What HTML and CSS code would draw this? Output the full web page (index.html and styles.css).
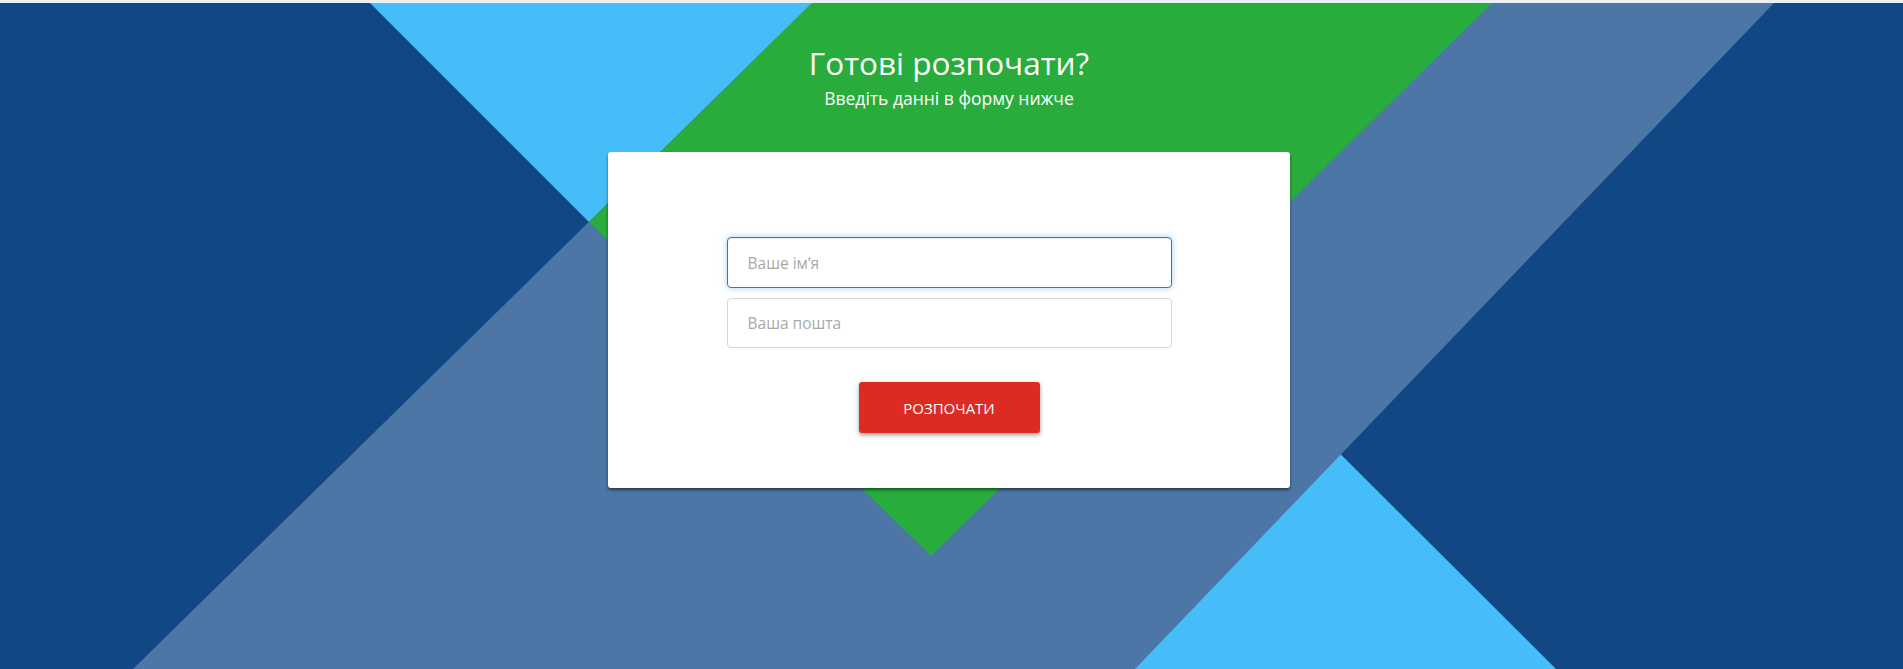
FILE: index.html
```html
<!DOCTYPE html>
<html lang="uk">
<head>
<meta charset="utf-8">
<title>Готові розпочати?</title>
<link rel="stylesheet" href="styles.css">
</head>
<body>
<div class="strip"></div>
<section class="hero">
  <svg class="hero-bg" viewBox="0 0 1903 666" preserveAspectRatio="none" aria-hidden="true">
    <rect x="0" y="0" width="1903" height="666" fill="#124785"/>
    <polygon points="370,0 888,0 1556,666 1036,666" fill="#46bdf8"/>
    <polygon points="812,0 1774,0 1135,666 133,666" fill="#4b76a6"/>
    <polygon points="812,0 1492,0 931,553 589,219" fill="#28ac3b"/>
  </svg>
  <div class="hero-content">
    <h1 class="title">Готові розпочати?</h1>
    <p class="subtitle">Введіть данні в форму нижче</p>
    <form class="card">
      <input class="field field-focus" type="text" placeholder="Ваше ім’я">
      <input class="field" type="email" placeholder="Ваша пошта">
      <button class="btn" type="button">Розпочати</button>
    </form>
  </div>
</section>
</body>
</html>
```

FILE: styles.css
```css
* {
  box-sizing: border-box;
}

html, body {
  margin: 0;
  padding: 0;
  height: 669px;
  overflow: hidden;
}

body {
  background: #e9f0f6;
  font-family: "Open Sans", "Noto Sans", sans-serif;
}

.strip {
  height: 3px;
  background: #e9f0f6;
}

.hero {
  position: relative;
  height: 666px;
  overflow: hidden;
}

.hero-bg {
  position: absolute;
  left: 0;
  top: 0;
  width: 100%;
  height: 100%;
  display: block;
}

.hero-content {
  position: relative;
  z-index: 1;
  display: flex;
  flex-direction: column;
  align-items: center;
  padding: 42px 5px 0 0;
}

.title {
  margin: 0;
  font-weight: 400;
  font-size: 31.5px;
  line-height: 36px;
  color: #ffffff;
}

.subtitle {
  margin: 6px 0 0;
  font-size: 17.5px;
  line-height: 22px;
  color: #ffffff;
}

.card {
  margin-top: 43px;
  width: 682px;
  height: 336px;
  background: #ffffff;
  border-radius: 3px;
  box-shadow: 0 2px 3px rgba(0, 0, 0, 0.5);
  display: flex;
  flex-direction: column;
  align-items: center;
  padding-top: 85px;
}

.field {
  width: 445px;
  height: 50px;
  margin: 0 0 10px;
  padding: 0 20px;
  border: 1px solid #d6d6d6;
  border-radius: 4px;
  background: #ffffff;
  font-family: "Open Sans", "Noto Sans", sans-serif;
  font-size: 15.5px;
  color: #555555;
  outline: none;
}

.field::placeholder {
  color: #a9a9a9;
}

.field-focus {
  height: 51px;
  border-color: #2b7fb3;
  box-shadow: inset 0 1px 1px rgba(0, 0, 0, 0.075), 0 0 6px rgba(102, 175, 233, 0.6);
}

.btn {
  margin-top: 24px;
  width: 181px;
  height: 51px;
  border: 0;
  border-radius: 3px;
  background: #dc2b23;
  color: #ffffff;
  font-family: "Open Sans", "Noto Sans", sans-serif;
  font-size: 15px;
  text-transform: uppercase;
  box-shadow: 0 2px 4px rgba(0, 0, 0, 0.4);
  cursor: pointer;
}
```
